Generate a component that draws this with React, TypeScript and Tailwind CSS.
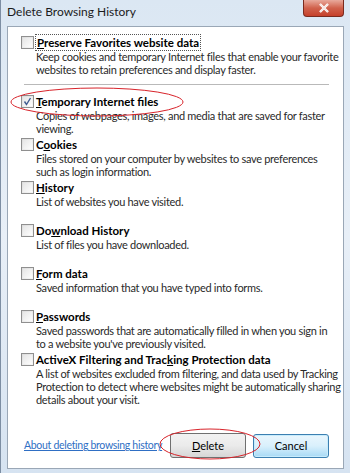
import type { ReactNode } from 'react';

type Item = { label: ReactNode; desc: string[]; checked?: boolean };

const u = (s: string) => <span className="underline">{s}</span>;

const items: Item[] = [
    {
        label: <>{u('T')}emporary Internet files</>,
        desc: ['Copies of webpages, images, and media that are saved for faster', 'viewing.'],
        checked: true,
    },
    {
        label: <>C{u('o')}okies</>,
        desc: ['Files stored on your computer by websites to save preferences', 'such as login information.'],
    },
    { label: <>{u('H')}istory</>, desc: ['List of websites you have visited.'] },
    { label: <>Do{u('w')}nload History</>, desc: ['List of files you have downloaded.'] },
    { label: <>{u('F')}orm data</>, desc: ['Saved information that you have typed into forms.'] },
    {
        label: <>{u('P')}asswords</>,
        desc: ['Saved passwords that are automatically filled in when you sign in', "to a website you've previously visited."],
    },
    {
        label: <>ActiveX Filtering and Trac{u('k')}ing Protection data</>,
        desc: [
            'A list of websites excluded from filtering, and data used by Tracking',
            'Protection to detect where websites might be automatically sharing',
            'details about your visit.',
        ],
    },
];

function CheckBox({ checked }: { checked?: boolean }) {
    return (
        <span className="w-[13px] h-[13px] shrink-0 border border-[#8f8f8f] bg-gradient-to-br from-[#dcdcdc] to-[#f8f8f8] p-[1px] flex">
            <span className="flex-1 bg-gradient-to-br from-[#e6e6e6] to-[#fdfdfd] flex items-center justify-center">
                {checked ? (
                    <svg width="9" height="9" viewBox="0 0 9 9">
                        <path d="M1.5 4.5 L3.5 7.5 L7.5 1" stroke="#3f5b8f" strokeWidth="1.4" fill="none" />
                    </svg>
                ) : null}
            </span>
        </span>
    );
}

function Desc({ lines }: { lines: string[] }) {
    return (
        <div className="pl-[15px] text-[#2a2a2a] tracking-[-0.3px]">
            {lines.map((d) => (
                <div key={d} className="h-[13px] leading-[13px]">
                    {d}
                </div>
            ))}
        </div>
    );
}

function Row({ item }: { item: Item }) {
    return (
        <div className="h-[43px]">
            <div className="flex items-center gap-[1px] h-[15px]">
                <CheckBox checked={item.checked} />
                <span className="font-bold text-[11.5px] text-black px-[1px]">{item.label}</span>
            </div>
            <Desc lines={item.desc} />
        </div>
    );
}

export default function App() {
    return (
        <div
            className="relative w-[350px] h-[473px] overflow-hidden whitespace-nowrap bg-gradient-to-b from-[#dbe7f3] via-[#e8eff7] to-[#d6e3f1] border-l border-[#7d8ea3] text-[11px] leading-[15px]"
            style={{ fontFamily: 'Lato, "Liberation Sans", sans-serif' }}
        >
            {/* title bar */}
            <div className="h-[26px] flex items-start justify-between pl-[6px] pr-[6px]">
                <span className="mt-[4px] text-[12px] text-[#1b1b1b]">Delete Browsing History</span>
                <div className="w-[41px] h-[17px] rounded-b-[4px] border border-t-0 border-[#7a2a1e] bg-gradient-to-b from-[#e8a99c] via-[#d0614c] to-[#c5402a] flex items-center justify-center">
                    <svg width="12" height="10" viewBox="0 0 12 10">
                        <path d="M2 1 L10 9 M10 1 L2 9" stroke="#ffffff" strokeWidth="2.4" />
                        <path d="M2 1 L10 9 M10 1 L2 9" stroke="#f4e6e3" strokeWidth="1.2" />
                    </svg>
                </div>
            </div>

            {/* content panel */}
            <div className="mx-[6px] h-[443px] border border-[#9aa7b6] bg-white flex flex-col pl-[13px] pr-[14px] pt-[8px]">
                <div className="h-[42px]">
                    <div className="flex items-center gap-[1px] h-[15px]">
                        <CheckBox />
                        <span className="font-bold text-[11.5px] text-black px-[1px] border border-dotted border-[#555]">
                            {u('P')}reserve Favorites website data
                        </span>
                    </div>
                    <Desc
                        lines={[
                            'Keep cookies and temporary Internet files that enable your favorite',
                            'websites to retain preferences and display faster.',
                        ]}
                    />
                </div>
                <div className="ml-[3px] w-[305px] mt-[7px] mb-[8px] h-[2px] border-t border-[#b9b9b9] border-b border-b-white" />
                {items.map((it, i) => (
                    <Row key={i} item={it} />
                ))}

                <div className="mt-auto mb-[10px] flex items-center">
                    <a href="#" className="ml-[3px] text-[10.5px] text-[#2f6fc4] underline tracking-[-0.3px]">
                        About deleting browsing history
                    </a>
                    <button className="ml-auto shrink-0 w-[76px] h-[25px] rounded-[3px] border border-[#707070] bg-gradient-to-b from-[#f2f2f2] via-[#ebebeb] to-[#d6d6d6] text-black">
                        {u('D')}elete
                    </button>
                    <button className="ml-[7px] shrink-0 w-[76px] h-[24px] rounded-[3px] border border-[#3c7fb1] bg-gradient-to-b from-[#eaf6fd] via-[#d9f0fc] to-[#a7d9f5] text-black shadow-[inset_0_0_0_1px_#c8ecfc]">
                        Cancel
                    </button>
                </div>
            </div>

            {/* red annotation ellipses */}
            <svg className="absolute left-0 top-0 pointer-events-none" width="350" height="473">
                <ellipse cx="96" cy="102" rx="86" ry="14" fill="none" stroke="#d8232a" strokeWidth="1" />
                <ellipse cx="209" cy="444" rx="50" ry="15" fill="none" stroke="#d8232a" strokeWidth="1" />
            </svg>
        </div>
    );
}
